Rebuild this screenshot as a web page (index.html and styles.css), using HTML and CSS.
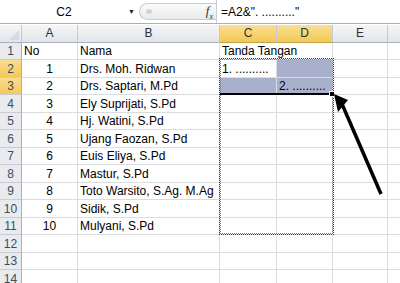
FILE: index.html
```html
<!DOCTYPE html>
<html lang="id">
<head>
    <meta charset="UTF-8">
    <title>Tanda Tangan</title>
    <link rel="stylesheet" href="styles.css">
</head>
<body>
    <!-- Formula Bar -->
    <div class="formula-bar">
        <div class="name-box"><span class="name">C2</span><span class="drop">&#9660;</span></div>
        <div class="fx-group"><span class="grip"></span><span class="fx">f<sub>x</sub></span></div>
        <div class="formula">=A2&amp;". .........."</div>
    </div>

    <!-- Sheet -->
    <table class="sheet">
        <colgroup>
            <col class="c-row"><col class="c-a"><col class="c-b"><col class="c-c"><col class="c-d"><col class="c-e"><col class="c-f">
        </colgroup>
        <thead>
            <tr>
                <th class="corner"><span class="tri"></span></th>
                <th>A</th><th>B</th><th class="on">C</th><th class="on">D</th><th>E</th><th></th>
            </tr>
        </thead>
        <tbody>
            <tr><th>1</th><td>No</td><td>Nama</td><td class="spill">Tanda Tangan</td><td></td><td></td><td></td></tr>
            <tr><th class="on">2</th><td class="num">1</td><td>Drs. Moh. Ridwan</td><td>1. ..........</td><td class="sel"></td><td></td><td></td></tr>
            <tr><th class="on">3</th><td class="num">2</td><td>Drs. Saptari, M.Pd</td><td class="sel"></td><td class="sel">2. ..........</td><td></td><td></td></tr>
            <tr><th>4</th><td class="num">3</td><td>Ely Suprijati, S.Pd</td><td></td><td></td><td></td><td></td></tr>
            <tr><th>5</th><td class="num">4</td><td>Hj. Watini, S.Pd</td><td></td><td></td><td></td><td></td></tr>
            <tr><th>6</th><td class="num">5</td><td>Ujang Faozan, S.Pd</td><td></td><td></td><td></td><td></td></tr>
            <tr><th>7</th><td class="num">6</td><td>Euis Eliya, S.Pd</td><td></td><td></td><td></td><td></td></tr>
            <tr><th>8</th><td class="num">7</td><td>Mastur, S.Pd</td><td></td><td></td><td></td><td></td></tr>
            <tr><th>9</th><td class="num">8</td><td>Toto Warsito, S.Ag. M.Ag</td><td></td><td></td><td></td><td></td></tr>
            <tr><th>10</th><td class="num">9</td><td>Sidik, S.Pd</td><td></td><td></td><td></td><td></td></tr>
            <tr><th>11</th><td class="num">10</td><td>Mulyani, S.Pd</td><td></td><td></td><td></td><td></td></tr>
            <tr><th>12</th><td></td><td></td><td></td><td></td><td></td><td></td></tr>
            <tr><th>13</th><td></td><td></td><td></td><td></td><td></td><td></td></tr>
            <tr><th>14</th><td></td><td></td><td></td><td></td><td></td><td></td></tr>
        </tbody>
    </table>

    <!-- Copy marquee, selection edge and arrow drawn over the sheet -->
    <div class="marquee"></div>
    <div class="sel-edge"><span class="handle"></span></div>
    <svg class="arrow" width="400" height="283" viewBox="0 0 400 283">
        <line x1="342" y1="104" x2="381" y2="194" stroke="#000" stroke-width="3.5"/>
        <polygon points="334,94 348,100 338,112" fill="#000"/>
    </svg>
</body>
</html>
```

FILE: styles.css
```css
body {
    margin: 0;
    width: 400px;
    height: 283px;
    overflow: hidden;
    position: relative;
    background-color: #fff;
    font-family: "Liberation Sans", Arial, sans-serif;
    font-size: 12px;
    color: #000;
}

/* formula bar */
.formula-bar {
    display: flex;
    align-items: center;
    height: 23px;
    border-bottom: 1px solid #a9b0b9;
}
.name-box {
    display: flex;
    align-items: center;
    width: 139px;
    height: 100%;
}
.name {
    width: 128px;
    text-align: center;
}
.drop {
    font-size: 7px;
    color: #222;
}
.fx-group {
    display: flex;
    align-items: center;
    justify-content: space-between;
    width: 77px;
    height: 17px;
    box-sizing: border-box;
    border: 1px solid #c9ccd1;
    border-right: none;
    border-radius: 9px 0 0 9px;
    background: linear-gradient(#fbfbfb, #e9eaec);
    padding: 0 3px 0 6px;
}
.grip {
    width: 6px;
    height: 5px;
    border-radius: 50%;
    background-color: #d2d4d8;
}
.fx {
    font-family: "Liberation Serif", serif;
    font-style: italic;
    font-size: 13px;
    color: #333;
}
.fx sub {
    font-size: 8px;
}
.formula {
    flex: 1;
    height: 100%;
    border-left: 1px solid #c9ccd1;
    padding-left: 4px;
    display: flex;
    align-items: center;
}

/* sheet */
.sheet {
    margin-top: 1px;
    border-collapse: separate;
    border-spacing: 0;
    table-layout: fixed;
    width: 420px;
}
.c-row { width: 22px; }
.c-a { width: 56px; }
.c-b { width: 142px; }
.c-c { width: 57px; }
.c-d { width: 56px; }
.c-e { width: 55px; }
.c-f { width: 32px; }

.sheet th, .sheet td {
    box-sizing: border-box;
    padding: 0 2px 1px;
    white-space: nowrap;
    vertical-align: bottom;
    font-weight: normal;
}
.sheet td {
    border-right: 1px solid #dadcdd;
    border-bottom: 1px solid #dadcdd;
}
.sheet thead tr {
    height: 18px;
}
.sheet thead th {
    text-align: center;
    vertical-align: middle;
    color: #28313b;
    background: linear-gradient(#f4f6f8, #e2e5e9);
    border-right: 1px solid #c5cad1;
    border-bottom: 1px solid #a9b0b9;
}
.sheet thead th.on {
    background: linear-gradient(#f9df96, #f4c851);
    border-bottom-color: #c2a24a;
}
.sheet tbody tr {
    height: 17px;
}
.sheet tbody tr:nth-child(even) {
    height: 18px;
}
.sheet tbody th {
    text-align: center;
    color: #3e4c5e;
    background-color: #e9ebee;
    border-right: 1px solid #a9b0b9;
    border-bottom: 1px solid #c9cdd3;
}
.sheet tbody th.on {
    background: linear-gradient(#f9dd94, #f4c957);
}
.corner {
    position: relative;
}
.tri {
    position: absolute;
    right: 2px;
    bottom: 2px;
    width: 0;
    height: 0;
    border-left: 10px solid transparent;
    border-bottom: 10px solid #d7dbe0;
}
.num {
    text-align: center;
}
.spill {
    overflow: visible;
    border-right-color: transparent !important;
}
.sel {
    background-color: #a9b0cc;
}

/* overlays */
.marquee {
    position: absolute;
    left: 219px;
    top: 58px;
    width: 115px;
    height: 177px;
    box-sizing: border-box;
    border: 1px dotted #3c3c3c;
}
.marquee::after {
    content: "";
    position: absolute;
    inset: 0;
    border: 1px dotted #7c7c7c;
}
.sel-edge {
    position: absolute;
    left: 220px;
    top: 93px;
    width: 111px;
    height: 2px;
    background-color: #000;
}
.handle {
    position: absolute;
    right: -4px;
    top: -2px;
    width: 4px;
    height: 4px;
    background-color: #000;
    border: 1px solid #fff;
}
.arrow {
    position: absolute;
    left: 0;
    top: 0;
    pointer-events: none;
}
```
